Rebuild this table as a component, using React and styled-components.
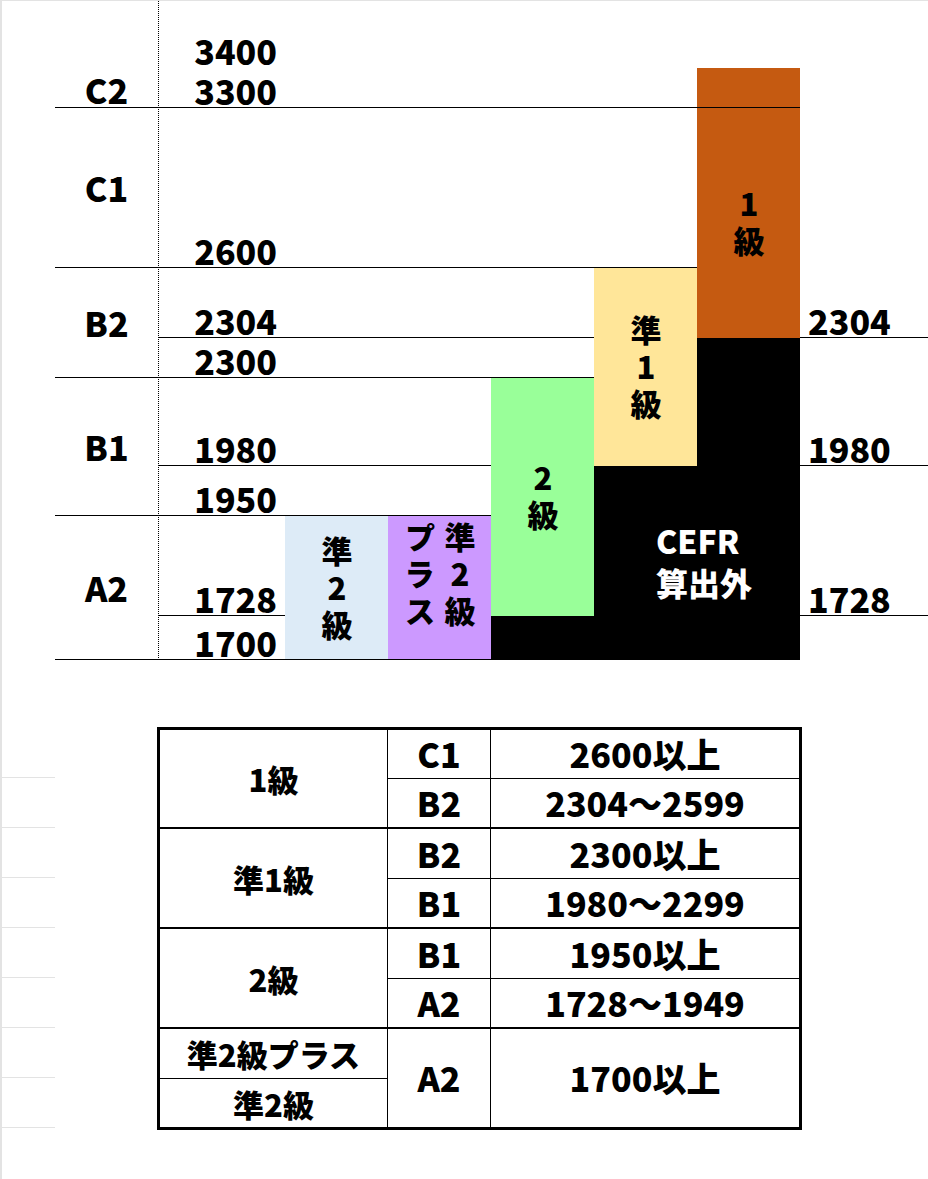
import React from 'react'
import styled, { createGlobalStyle } from 'styled-components'

const GlobalStyle = createGlobalStyle`
  * { box-sizing: border-box; }
  body {
    margin: 0;
    background: #fff;
  }
`

const Page = styled.div`
  width: 928px;
  height: 1179px;
  overflow: hidden;
  border-left: 2px solid #e3e3e3;
  border-top: 1px solid #e3e3e3;
  font-family: "Noto Sans CJK JP", "Noto Sans", sans-serif;
  font-weight: 900;
  color: #000;
`

// chart: spreadsheet grid, columns 55 | 103 | 127 | 5 x 103 | rest
const Chart = styled.div`
  display: grid;
  grid-template-columns: 53px 103px 127px repeat(5, 103px) 1fr;
  grid-template-rows: 67px 40px 160px 70px 40px 88px 50px 100px 44px;
`

const Dotted = styled.div`
  grid-column: 3;
  grid-row: 1 / 10;
  border-left: 1px dotted #000;
  z-index: 2;
`

const Rule = styled.div`
  grid-column: ${p => p.$col};
  grid-row: ${p => p.$row};
  align-self: end;
  height: 1px;
  background: #000;
  z-index: 2;
`

const Bar = styled.div`
  grid-column: ${p => p.$col};
  grid-row: ${p => p.$row};
  background: ${p => p.$bg};
  padding-top: ${p => p.$offset || 0}px;
  display: flex;
  align-items: center;
  justify-content: center;
  z-index: 1;
`

const BarLabel = styled.div`
  writing-mode: vertical-rl;
  text-orientation: upright;
  font-size: 31px;
  line-height: 40px;
  letter-spacing: 6px;
  padding-top: 6px;
`

const Note = styled.div`
  grid-column: 7 / 9;
  grid-row: 7 / 10;
  display: flex;
  align-items: center;
  justify-content: center;
  padding: 0 0 4px 14px;
  color: #fff;
  font-size: 32px;
  line-height: 42px;
  z-index: 3;
`

const Level = styled.div`
  grid-column: 2;
  grid-row: ${p => p.$row};
  display: flex;
  align-items: center;
  justify-content: center;
  padding-top: ${p => p.$nudge || 0}px;
  font-size: 34px;
  line-height: 1;
`

const Score = styled.div`
  grid-column: ${p => (p.$side === 'right' ? 9 : 3)};
  grid-row: ${p => p.$row};
  align-self: end;
  justify-self: ${p => (p.$side === 'right' ? 'start' : 'end')};
  padding: ${p => (p.$side === 'right' ? '0 0 0 8px' : '0 8px 0 0')};
  font-size: 34px;
  line-height: 34px;
  height: 34px;
`

// lower part: reference table
const Lower = styled.div`
  display: flex;
  align-items: flex-start;
  margin-top: 67px;
`

const Gutter = styled.div`
  width: 53px;
  margin-top: 1px;
  display: flex;
  flex-direction: column;
`

const GutterCell = styled.div`
  height: 50px;
  border-bottom: 1px solid #e3e3e3;
`

const Table = styled.table`
  margin-left: 102px;
  width: 645px;
  table-layout: fixed;
  border-collapse: separate;
  border-spacing: 0;
  border: 3px solid #000;
`

const Row = styled.tr`
  height: ${p => p.$h || 50}px;
`

const Cell = styled.td`
  padding: 0;
  text-align: center;
  vertical-align: middle;
  line-height: 1;
  font-size: ${p => p.$size || 34}px;
  border-right: ${p => (p.$right ? '1px solid #000' : 'none')};
  border-bottom: ${p => (p.$bottom ? `${p.$bottom}px solid #000` : 'none')};
`

const rules = [
  ['2 / 9', 2],
  ['2 / 8', 3],
  ['3 / 7', 4],
  ['9 / 10', 4],
  ['2 / 7', 5],
  ['3 / 6', 6],
  ['9 / 10', 6],
  ['2 / 6', 7],
  ['3 / 4', 8],
  ['9 / 10', 8],
  ['2 / 9', 9],
]

const scores = [
  ['3400', 1],
  ['3300', 2],
  ['2600', 3],
  ['2304', 4],
  ['2300', 5],
  ['1980', 6],
  ['1950', 7],
  ['1728', 8],
  ['1700', 9],
]

const groups = [
  { grade: '1級', first: 49, rows: [['C1', '2600以上'], ['B2', '2304～2599']] },
  { grade: '準1級', first: 50, rows: [['B2', '2300以上'], ['B1', '1980～2299']] },
  { grade: '2級', first: 50, rows: [['B1', '1950以上'], ['A2', '1728～1949']] },
]

export default function App() {
  return (
    <Page>
      <GlobalStyle />
      <Chart>
        <Dotted />

        <Level $row="2 / 3" $nudge={4}>C2</Level>
        <Level $row="3 / 4">C1</Level>
        <Level $row="4 / 6">B2</Level>
        <Level $row="6 / 8">B1</Level>
        <Level $row="8 / 10">A2</Level>

        {scores.map(([v, r]) => (
          <Score key={v} $row={r}>{v}</Score>
        ))}
        <Score $side="right" $row={4}>2304</Score>
        <Score $side="right" $row={6}>1980</Score>
        <Score $side="right" $row={8}>1728</Score>

        <Bar $col={4} $row="8 / 10" $bg="#ddebf7">
          <BarLabel>準2級</BarLabel>
        </Bar>
        <Bar $col={5} $row="8 / 10" $bg="#cc99ff">
          <BarLabel>準2級プラス</BarLabel>
        </Bar>
        <Bar $col={6} $row="6 / 9" $bg="#99ff99">
          <BarLabel>2級</BarLabel>
        </Bar>
        <Bar $col={7} $row="4 / 7" $bg="#ffe699">
          <BarLabel>準1級</BarLabel>
        </Bar>
        <Bar $col={8} $row="2 / 5" $bg="#c55a11" $offset={40}>
          <BarLabel>1級</BarLabel>
        </Bar>
        <Bar $col={6} $row="9 / 10" $bg="#000" />
        <Bar $col={7} $row="7 / 10" $bg="#000" />
        <Bar $col={8} $row="5 / 10" $bg="#000" />
        <Note>
          <div>CEFR<br />算出外</div>
        </Note>

        {rules.map(([c, r], i) => (
          <Rule key={i} $col={c} $row={r} />
        ))}
      </Chart>

      <Lower>
        <Gutter>
          {Array.from({ length: 8 }, (_, i) => <GutterCell key={i} />)}
        </Gutter>
        <Table>
          <colgroup>
            <col style={{ width: 228 }} />
            <col style={{ width: 103 }} />
            <col />
          </colgroup>
          <tbody>
            {groups.map(g => (
              <React.Fragment key={g.grade}>
                <Row $h={g.first}>
                  <Cell rowSpan={2} $right $bottom={2} $size={31}>{g.grade}</Cell>
                  <Cell $right $bottom={1}>{g.rows[0][0]}</Cell>
                  <Cell $bottom={1}>{g.rows[0][1]}</Cell>
                </Row>
                <Row>
                  <Cell $right $bottom={2}>{g.rows[1][0]}</Cell>
                  <Cell $bottom={2}>{g.rows[1][1]}</Cell>
                </Row>
              </React.Fragment>
            ))}
            <Row>
              <Cell $right $bottom={1} $size={31}>準2級プラス</Cell>
              <Cell rowSpan={2} $right>A2</Cell>
              <Cell rowSpan={2}>1700以上</Cell>
            </Row>
            <Row $h={48}>
              <Cell $right $size={31}>準2級</Cell>
            </Row>
          </tbody>
        </Table>
      </Lower>
    </Page>
  )
}
